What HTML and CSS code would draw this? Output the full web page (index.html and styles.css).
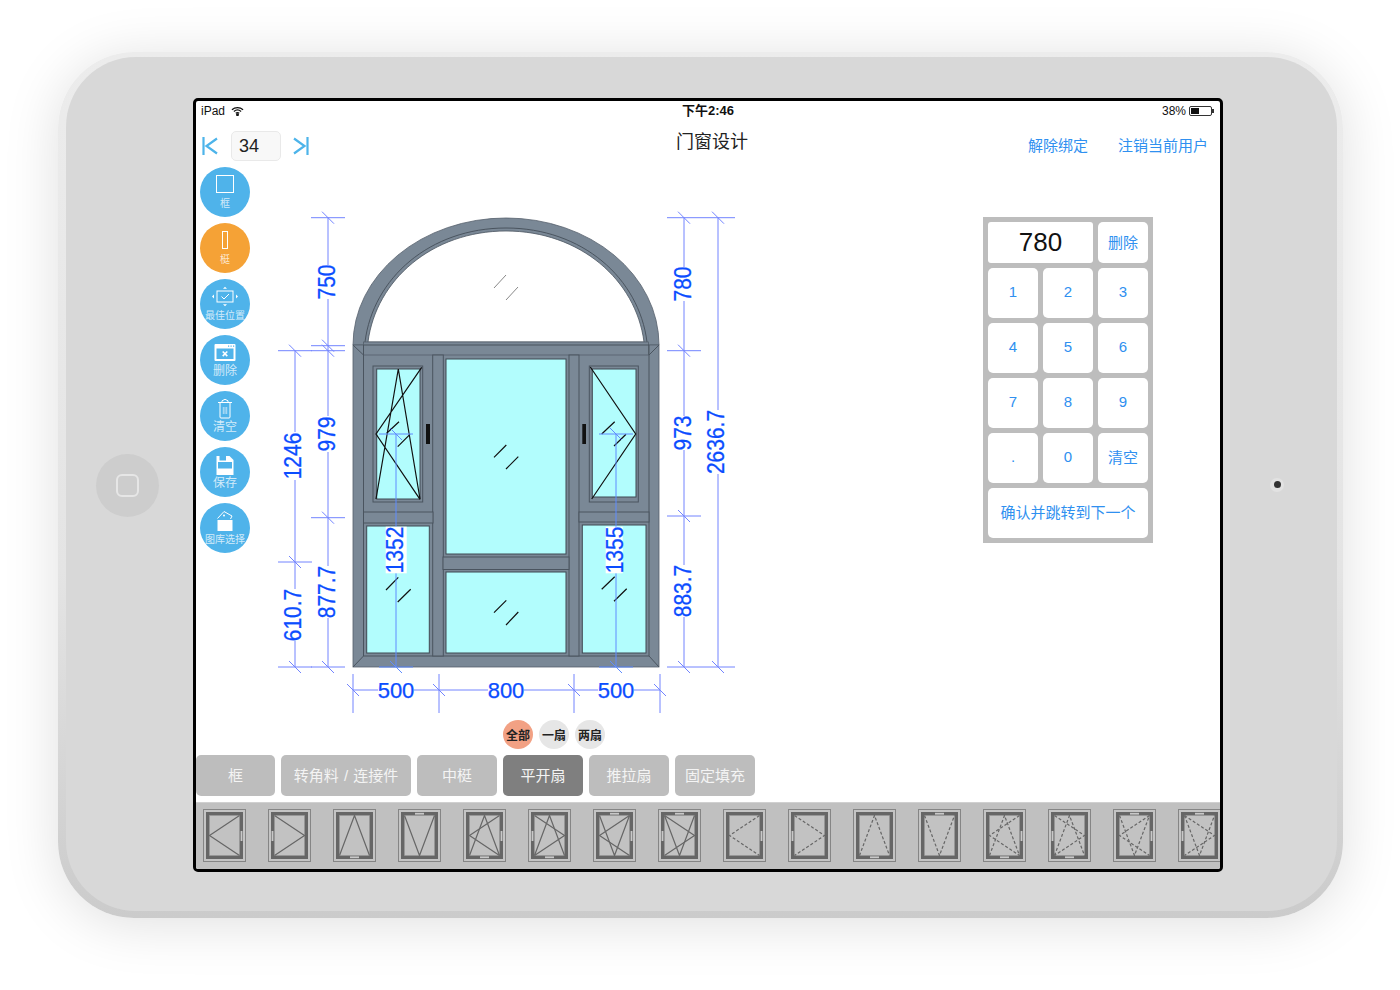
FILE: index.html
```html
<!DOCTYPE html>
<html lang="zh-CN">
<head>
    <meta charset="UTF-8">
    <meta name="viewport" content="width=device-width, initial-scale=1.0">
    <title>门窗设计</title>
    <link rel="stylesheet" href="styles.css">
</head>
<body>
    <svg class="svg-defs" aria-hidden="true">
        <defs>
            <g id="tb">
                <rect class="tb-outer" x=".5" y=".5" width="42" height="52"/>
                <rect class="tb-frame" x="3" y="3" width="37" height="47"/>
                <rect class="tb-pane" x="6.5" y="6.5" width="30" height="40"/>
            </g>
            <polyline id="open-left" points="36.5,6.5 6.5,26.5 36.5,46.5"/>
            <polyline id="open-right" points="6.5,6.5 36.5,26.5 6.5,46.5"/>
            <polyline id="open-up" points="6.5,46.5 21.5,6.5 36.5,46.5"/>
            <polyline id="open-down" points="6.5,6.5 21.5,46.5 36.5,6.5"/>
            <rect id="h-right" class="tb-handle" x="37.6" y="22" width="1.8" height="10"/>
            <rect id="h-left" class="tb-handle" x="3.6" y="22" width="1.8" height="10"/>
            <rect id="h-top" class="tb-handle" x="17" y="3.8" width="9" height="1.8"/>
            <rect id="h-bottom" class="tb-handle" x="17" y="47.4" width="9" height="1.8"/>
            <g id="tk">
                <line x1="-17" y1="0" x2="17" y2="0"/>
                <line x1="-6" y1="-6" x2="6" y2="6"/>
            </g>
            <g id="tv">
                <line x1="0" y1="-16" x2="0" y2="23"/>
                <line x1="-6" y1="-6" x2="6" y2="6"/>
            </g>
        </defs>
    </svg>

    <div class="device">
        <div class="face">
            <div class="home-btn"><span class="home-glyph"></span></div>

            <div class="screen">
                <div class="status-bar">
                    <div class="status-left">
                        <span>iPad</span>
                        <svg class="wifi" viewBox="0 0 14 10"><path d="M1 3.6C4.4.5 9.6.5 13 3.6M3.1 5.6c2.3-2 5.5-2 7.8 0M5.1 7.4c1.1-.9 2.7-.9 3.8 0"/><circle cx="7" cy="9" r=".9"/></svg>
                    </div>
                    <div class="status-time">下午2:46</div>
                    <div class="status-right">
                        <span>38%</span>
                        <span class="battery"><span class="battery-level"></span></span>
                    </div>
                </div>

                <div class="top-bar">
                    <div class="pager">
                        <svg class="pager-arrow" viewBox="0 0 16 18"><path d="M1.5 0v18M15 1.5 4.5 9 15 16.5"/></svg>
                        <div class="pager-input">34</div>
                        <svg class="pager-arrow" viewBox="0 0 16 18"><path d="M14.5 0v18M1 1.5 11.5 9 1 16.5"/></svg>
                    </div>
                    <h1 class="page-title">门窗设计</h1>
                    <div class="top-links">
                        <a>解除绑定</a>
                        <a>注销当前用户</a>
                    </div>
                </div>

                <div class="main">
                    <div class="side-tools">
                        <button class="tool">
                            <svg viewBox="0 0 28 22"><rect class="ic-line" x="5.5" y="1.5" width="17" height="17"/></svg>
                            <span>框</span>
                        </button>
                        <button class="tool tool-on">
                            <svg viewBox="0 0 28 22"><rect class="ic-line" x="11.5" y="1.5" width="5" height="17"/></svg>
                            <span>梃</span>
                        </button>
                        <button class="tool">
                            <svg viewBox="0 0 28 22">
                                <rect class="ic-line" x="6" y="5" width="16" height="11"/>
                                <path class="ic-line" d="m10.5 10.5 2.5 2.5 5-5"/>
                                <path class="ic-fill" d="M14 .8l2 2h-4zM14 20.2l2-2h-4zM1 10.5l2-2v4zM27 10.5l-2-2v4z"/>
                            </svg>
                            <span>最佳位置</span>
                        </button>
                        <button class="tool tool-big">
                            <svg viewBox="0 0 28 22">
                                <rect class="ic-fill" x="3.500" y="2" width="21" height="17" rx="1"/>
                                <rect class="ic-cut" x="5.500" y="6.500" width="17" height="10.500"/>
                                <path class="ic-cut" d="M17 3.500h1.200v1.200H17zM19.500 3.500h1.200v1.200h-1.200zM22 3.500h1.200v1.200H22z"/>
                                <path class="ic-line-thick" d="m11.700 9.500 4.600 4.600M16.300 9.500l-4.600 4.600"/>
                            </svg>
                            <span>删除</span>
                        </button>
                        <button class="tool tool-big">
                            <svg viewBox="0 0 28 22">
                                <path class="ic-line" d="M7 4.500h14M11 4.500V2.800l3-1.500 3 1.500v1.700M9 4.500v14.500a1 1 0 0 0 1 1h8a1 1 0 0 0 1-1V4.500"/>
                                <path class="ic-thin" d="M12.300 9v7M14 9v7M15.700 9v7"/>
                            </svg>
                            <span>清空</span>
                        </button>
                        <button class="tool tool-big">
                            <svg viewBox="0 0 28 22">
                                <path class="ic-fill" d="M5.500 2h13l4 4v15h-17z"/>
                                <rect class="ic-cut" x="8.500" y="2" width="6.500" height="4.500"/>
                                <rect class="ic-cut" x="7" y="8" width="14" height="6.500"/>
                            </svg>
                            <span>保存</span>
                        </button>
                        <button class="tool">
                            <svg viewBox="0 0 28 22">
                                <path class="ic-line" d="m6.500 8.500 6.500-7 8 4.500-1.500 3"/>
                                <circle class="ic-fill" cx="13" cy="5.500" r="1"/>
                                <rect class="ic-fill" x="6.500" y="10" width="15" height="11"/>
                            </svg>
                            <span>图库选择</span>
                        </button>
                    </div>

                    <!-- viewBox uses the same numbers as the page so parts are easy to place -->
                    <svg class="drawing" viewBox="270 205 480 515">
                        <path class="prof" d="M353 345A153 127 0 0 1 659 345Z"/>
                        <path class="arch-line" d="M365 342C373 278 430 228 506 228C582 228 639 278 647 342"/>
                        <path class="arch-glass" d="M368 342C376 280 432 231 506 231C580 231 636 280 644 342Z"/>

                        <rect class="prof" x="353" y="345" width="306" height="322"/>
                        <rect class="prof" x="363.500" y="342" width="285" height="13"/>
                        <path class="prof-line" d="M363.500 345V656H649V345ZM353 345l10.500 10M659 345l-10 10M353 667l10.500-11M659 667l-10-11"/>

                        <rect class="prof-in" x="432.700" y="355" width="10.600" height="301"/>
                        <rect class="prof-in" x="569" y="355" width="10" height="301"/>
                        <rect class="prof-in" x="443" y="557" width="126" height="12.500"/>
                        <rect class="prof-in" x="363.500" y="512" width="69.500" height="11"/>
                        <rect class="prof-in" x="579" y="512" width="70" height="10"/>

                        <rect class="glass" x="446" y="359" width="120" height="195"/>
                        <rect class="glass" x="446" y="572" width="120" height="81"/>
                        <rect class="glass" x="366.700" y="526" width="62.600" height="127"/>
                        <rect class="glass" x="582.300" y="525" width="63.700" height="128"/>

                        <rect class="prof-in" x="373" y="366" width="49.700" height="136"/>
                        <rect class="glass" x="376.700" y="369" width="43.300" height="130"/>
                        <rect class="prof-in" x="589.300" y="366" width="49" height="136"/>
                        <rect class="glass" x="592.300" y="369" width="43.700" height="128"/>

                        <rect class="handle" x="426" y="424" width="4" height="20"/>
                        <rect class="handle" x="582.300" y="424" width="3.700" height="20"/>

                        <path class="sash-line" d="M421.700 367.300 376 434 420 499.300M376 499 398.300 369 420 499"/>
                        <path class="sash-line" d="M590.300 367 635.700 434 591.700 499"/>

                        <path class="slash" d="M494 457.300 506.300 445M506 469 518.300 456.700M494 612.700 506.300 600.300M506 625 518.300 612M386.700 433.300 399 421.700M397.700 446.700 410 434.300M386 590 398.300 577.300M397.700 602 410.700 589.300M601.700 434 614.700 421.700M614 446 626 434.300M601.700 589.300 614.700 576.700M614 601.300 626.700 588.700"/>
                        <path class="slash-thin" d="M494 288 506 275M506 300 518 287"/>

                        <g class="dim">
                            <path d="M295 350.700V432M295 480V589M295 641V667M328 217.700V265M328 299V416M328 452V566M328 618V667M684 217.700V267M684 301V416M684 450V565M684 617V667M718 217.700V410M718 474V667"/>
                            <path d="M353 690H378M414 690H488M524 690H598M634 690H660"/>
                            <use href="#tk" x="295" y="350.700"/>
                            <use href="#tk" x="295" y="562"/>
                            <use href="#tk" x="295" y="667"/>
                            <use href="#tk" x="328" y="217.700"/>
                            <use href="#tk" x="328" y="345.700"/>
                            <use href="#tk" x="328" y="350.700"/>
                            <use href="#tk" x="328" y="517.700"/>
                            <use href="#tk" x="328" y="667"/>
                            <use href="#tk" x="684" y="217.700"/>
                            <use href="#tk" x="684" y="350.700"/>
                            <use href="#tk" x="684" y="516"/>
                            <use href="#tk" x="684" y="667"/>
                            <use href="#tk" x="718" y="217.700"/>
                            <use href="#tk" x="718" y="667"/>
                            <use href="#tv" x="353" y="690"/>
                            <use href="#tv" x="439" y="690"/>
                            <use href="#tv" x="574" y="690"/>
                            <use href="#tv" x="660" y="690"/>
                        </g>
                        <g class="dim dim-inner">
                            <path d="M396 434V667M616 434V667"/>
                            <use href="#tk" x="396" y="434"/>
                            <use href="#tk" x="396" y="667"/>
                            <use href="#tk" x="616" y="434"/>
                            <use href="#tk" x="616" y="667"/>
                        </g>

                        <rect class="label-bg" x="385.700" y="526.700" width="21" height="46.600"/>
                        <rect class="label-bg" x="605.700" y="526.700" width="17" height="46.600"/>

                        <text class="dim-v" transform="translate(301 456) rotate(-90) scale(1 1.13)">1246</text>
                        <text class="dim-v" transform="translate(301 615) rotate(-90) scale(1 1.13)">610.7</text>
                        <text class="dim-v" transform="translate(335 282) rotate(-90) scale(1 1.13)">750</text>
                        <text class="dim-v" transform="translate(335 434) rotate(-90) scale(1 1.13)">979</text>
                        <text class="dim-v" transform="translate(335 592) rotate(-90) scale(1 1.13)">877.7</text>
                        <text class="dim-v" transform="translate(403 550) rotate(-90) scale(1 1.13)">1352</text>
                        <text class="dim-v" transform="translate(622.500 550) rotate(-90) scale(1 1.13)">1355</text>
                        <text class="dim-v" transform="translate(691 284) rotate(-90) scale(1 1.13)">780</text>
                        <text class="dim-v" transform="translate(691 433) rotate(-90) scale(1 1.13)">973</text>
                        <text class="dim-v" transform="translate(691 591) rotate(-90) scale(1 1.13)">883.7</text>
                        <text class="dim-v" transform="translate(724 442) rotate(-90) scale(1 1.13)">2636.7</text>
                        <text class="dim-h" x="396" y="698">500</text>
                        <text class="dim-h" x="506" y="698">800</text>
                        <text class="dim-h" x="616" y="698">500</text>
                    </svg>

                    <div class="keypad">
                        <div class="key-display">780</div>
                        <button class="key">删除</button>
                        <button class="key">1</button>
                        <button class="key">2</button>
                        <button class="key">3</button>
                        <button class="key">4</button>
                        <button class="key">5</button>
                        <button class="key">6</button>
                        <button class="key">7</button>
                        <button class="key">8</button>
                        <button class="key">9</button>
                        <button class="key">.</button>
                        <button class="key">0</button>
                        <button class="key">清空</button>
                        <button class="key key-wide">确认并跳转到下一个</button>
                    </div>
                </div>

                <div class="chips">
                    <span class="chip chip-on">全部</span>
                    <span class="chip">一扇</span>
                    <span class="chip">两扇</span>
                </div>

                <div class="tabs">
                    <button class="tab tab-s">框</button>
                    <button class="tab tab-l">转角料 / 连接件</button>
                    <button class="tab">中梃</button>
                    <button class="tab tab-on">平开扇</button>
                    <button class="tab">推拉扇</button>
                    <button class="tab">固定填充</button>
                </div>

                <div class="palette">
                    <svg class="thumb" viewBox="0 0 43 53"><use href="#tb"/><use href="#h-right"/><use href="#open-left"/></svg>
                    <svg class="thumb" viewBox="0 0 43 53"><use href="#tb"/><use href="#h-left"/><use href="#open-right"/></svg>
                    <svg class="thumb" viewBox="0 0 43 53"><use href="#tb"/><use href="#h-bottom"/><use href="#open-up"/></svg>
                    <svg class="thumb" viewBox="0 0 43 53"><use href="#tb"/><use href="#h-top"/><use href="#open-down"/></svg>
                    <svg class="thumb" viewBox="0 0 43 53"><use href="#tb"/><use href="#h-right"/><use href="#h-bottom"/><use href="#open-left"/><use href="#open-up"/></svg>
                    <svg class="thumb" viewBox="0 0 43 53"><use href="#tb"/><use href="#h-left"/><use href="#h-bottom"/><use href="#open-right"/><use href="#open-up"/></svg>
                    <svg class="thumb" viewBox="0 0 43 53"><use href="#tb"/><use href="#h-right"/><use href="#h-top"/><use href="#open-left"/><use href="#open-down"/></svg>
                    <svg class="thumb" viewBox="0 0 43 53"><use href="#tb"/><use href="#h-left"/><use href="#h-top"/><use href="#open-right"/><use href="#open-down"/></svg>
                    <svg class="thumb dashed" viewBox="0 0 43 53"><use href="#tb"/><use href="#h-right"/><use href="#open-left"/></svg>
                    <svg class="thumb dashed" viewBox="0 0 43 53"><use href="#tb"/><use href="#h-left"/><use href="#open-right"/></svg>
                    <svg class="thumb dashed" viewBox="0 0 43 53"><use href="#tb"/><use href="#h-bottom"/><use href="#open-up"/></svg>
                    <svg class="thumb dashed" viewBox="0 0 43 53"><use href="#tb"/><use href="#h-top"/><use href="#open-down"/></svg>
                    <svg class="thumb dashed" viewBox="0 0 43 53"><use href="#tb"/><use href="#h-right"/><use href="#h-bottom"/><use href="#open-left"/><use href="#open-up"/></svg>
                    <svg class="thumb dashed" viewBox="0 0 43 53"><use href="#tb"/><use href="#h-left"/><use href="#h-bottom"/><use href="#open-right"/><use href="#open-up"/></svg>
                    <svg class="thumb dashed" viewBox="0 0 43 53"><use href="#tb"/><use href="#h-right"/><use href="#h-top"/><use href="#open-left"/><use href="#open-down"/></svg>
                    <svg class="thumb dashed" viewBox="0 0 43 53"><use href="#tb"/><use href="#h-left"/><use href="#h-top"/><use href="#open-right"/><use href="#open-down"/></svg>
                </div>
            </div>

            <div class="camera"><span class="lens"></span></div>
        </div>
    </div>
</body>
</html>
```

FILE: styles.css
```css
* {
    box-sizing: border-box;
}
html, body {
    margin: 0;
    height: 990px;
    overflow: hidden;
    background-color: #fff;
}
body {
    padding: 52px 57px 0 58px;
    font-family: "Liberation Sans", "Noto Sans CJK SC", sans-serif;
    color: #111;
}
button {
    font-family: inherit;
    border: none;
    padding: 0;
    cursor: pointer;
}
.svg-defs {
    position: absolute;
    width: 0;
    height: 0;
}

/* device shell */
.device {
    width: 1285px;
    height: 866px;
    padding: 5px 6px 7px 8px;
    border-radius: 76px;
    background: linear-gradient(#ececec, #e4e4e4 60%, #cbcbcb);
    box-shadow: 0 6px 55px rgba(0, 0, 0, 0.13);
}
.face {
    height: 100%;
    display: grid;
    grid-template-columns: 127px 1030px 1fr;
    align-items: center;
    border-radius: 70px;
    background-color: #d8d8d8;
}
.home-btn {
    width: 63px;
    height: 63px;
    margin: 2px 0 0 30px;
    display: flex;
    align-items: center;
    justify-content: center;
    border-radius: 50%;
    background-color: #cdcdcd;
}
.home-glyph {
    width: 23px;
    height: 23px;
    border: 2px solid #e6e6e6;
    border-radius: 6px;
}
.camera {
    width: 14px;
    height: 14px;
    margin: 1px 0 0 47px;
    display: flex;
    align-items: center;
    justify-content: center;
    border-radius: 50%;
    background-color: #e2e2e2;
}
.lens {
    width: 7px;
    height: 7px;
    border-radius: 50%;
    background-color: #333;
}
.screen {
    align-self: start;
    width: 1030px;
    height: 774px;
    margin-top: 41px;
    display: flex;
    flex-direction: column;
    overflow: hidden;
    border: 3px solid #000;
    border-radius: 5px;
    background-color: #fff;
}

/* status bar */
.status-bar {
    height: 20px;
    flex-shrink: 0;
    display: grid;
    grid-template-columns: 1fr auto 1fr;
    align-items: center;
    padding: 0 8px 0 5px;
    font-size: 12px;
}
.status-left, .status-right {
    display: flex;
    align-items: center;
    gap: 6px;
}
.status-right {
    justify-content: flex-end;
    gap: 3px;
}
.status-time {
    margin: -1px 0 0 3px;
    font-size: 13px;
    line-height: 20px;
    font-weight: bold;
}
.wifi {
    width: 13px;
    height: 10px;
    fill: #111;
    stroke: #111;
    stroke-width: 1.300;
}
.wifi path {
    fill: none;
}
.battery {
    position: relative;
    width: 23px;
    height: 10px;
    padding: 1px;
    border: 1px solid #333;
    border-radius: 2px;
}
.battery::after {
    content: "";
    position: absolute;
    right: -3px;
    top: 2px;
    width: 2px;
    height: 4px;
    background-color: #333;
}
.battery-level {
    display: block;
    width: 8px;
    height: 100%;
    background-color: #111;
}

/* header */
.top-bar {
    height: 46px;
    flex-shrink: 0;
    display: grid;
    grid-template-columns: 480px auto 1fr;
}
.pager {
    display: flex;
    align-items: center;
    padding: 4px 0 0 6px;
    height: 46px;
}
.pager-arrow {
    width: 16px;
    height: 18px;
    fill: none;
    stroke: #4db4ea;
    stroke-width: 2.200;
}
.pager-input {
    width: 50px;
    height: 30px;
    margin: 0 12px 0 13px;
    padding-left: 7px;
    line-height: 28px;
    font-size: 18px;
    color: #222;
    border: 1px solid #e9e9e9;
    border-radius: 5px;
    background-color: #f8f8f8;
}
.page-title {
    margin: 9px 0 0;
    font-size: 18px;
    font-weight: 400;
    line-height: 24px;
    color: #222;
}
.top-links {
    display: flex;
    justify-content: flex-end;
    gap: 30px;
    padding: 13px 12px 0 0;
    font-size: 15px;
    line-height: 24px;
    color: #2f90f0;
}

/* tools + drawing + keypad */
.main {
    height: 553px;
    flex-shrink: 0;
    display: flex;
}
.side-tools {
    width: 74px;
    flex-shrink: 0;
    padding-left: 4px;
    display: flex;
    flex-direction: column;
    gap: 6px;
}
.tool {
    width: 50px;
    height: 50px;
    padding-top: 7px;
    display: flex;
    flex-direction: column;
    align-items: center;
    border-radius: 50%;
    background-color: #4fb3ea;
    color: rgba(255, 255, 255, 0.75);
    font-size: 10px;
    line-height: 15px;
    white-space: nowrap;
}
.tool svg {
    width: 28px;
    height: 22px;
    flex-shrink: 0;
}
.tool-big {
    font-size: 12px;
}
.tool-on {
    background-color: #f5a236;
}
.ic-line {
    fill: none;
    stroke: #fff;
    stroke-width: 1;
}
.ic-thin {
    fill: none;
    stroke: #fff;
    stroke-width: .6;
}
.ic-line-thick {
    fill: none;
    stroke: #fff;
    stroke-width: 1.600;
}
.ic-fill {
    fill: #fff;
}
.ic-cut {
    fill: #4fb3ea;
}
.drawing {
    width: 480px;
    height: 515px;
    margin-top: 38px;
    flex-shrink: 0;
}
.prof {
    fill: #7a8896;
    stroke: #55606c;
    stroke-width: .8;
}
.prof-in {
    fill: #7a8896;
    stroke: #4a545f;
    stroke-width: 1;
}
.prof-line, .arch-line {
    fill: none;
    stroke: #4a545f;
    stroke-width: 1;
}
.arch-glass {
    fill: #fff;
    stroke: #4a545f;
    stroke-width: .8;
}
.glass {
    fill: #b2fdfd;
    stroke: #3f4953;
    stroke-width: 1;
}
.handle {
    fill: #111;
}
.sash-line {
    fill: none;
    stroke: #111;
    stroke-width: 1.200;
}
.slash {
    fill: none;
    stroke: #111;
    stroke-width: 1.200;
}
.slash-thin {
    fill: none;
    stroke: #888;
    stroke-width: 1;
}
.dim {
    fill: none;
    stroke: #7284ff;
    stroke-width: 1;
}
.dim-inner {
    stroke: #5f8cff;
}
.label-bg {
    fill: #fff;
}
.dim-v, .dim-h {
    font-size: 21px;
    fill: #0b4dff;
    stroke: #0b4dff;
    stroke-width: .25;
    text-anchor: middle;
}
.dim-h {
    font-size: 22px;
}

.keypad {
    width: 170px;
    height: 326px;
    margin: 50px 0 0 233px;
    flex-shrink: 0;
    padding: 5px;
    display: grid;
    grid-template-columns: repeat(3, 50px);
    grid-template-rows: 41px repeat(5, 50px);
    gap: 5px;
    background-color: #bdbdbd;
}
.key-display {
    grid-column: span 2;
    background-color: #fff;
    border-radius: 3px;
    text-align: center;
    font-size: 26px;
    line-height: 41px;
    color: #111;
}
.key {
    padding-bottom: 3px;
    border-radius: 5px;
    background-color: #fff;
    color: #2f90f0;
    font-size: 15px;
}
.key-wide {
    grid-column: span 3;
}

/* filters */
.chips {
    height: 29px;
    flex-shrink: 0;
    display: flex;
    gap: 6px;
    margin-left: 307px;
}
.chip {
    width: 30px;
    display: flex;
    align-items: center;
    justify-content: center;
    border-radius: 50%;
    background-color: #e6e6e6;
    color: #222;
    font-size: 12px;
    font-weight: bold;
    white-space: nowrap;
}
.chip-on {
    background-color: #f2a184;
}
.tabs {
    height: 41px;
    margin-top: 6px;
    flex-shrink: 0;
    display: flex;
    gap: 6px;
}
.tab {
    width: 80px;
    padding-bottom: 2px;
    border-radius: 5px;
    background-color: #bdbdbd;
    color: #f4f4f4;
    font-size: 15px;
    word-spacing: 1px;
}
.tab-s {
    width: 79px;
}
.tab-l {
    width: 130px;
}
.tab-on {
    background-color: #7f7f7f;
}

/* thumbnails, the last one is cut off by the screen edge */
.palette {
    height: 68px;
    margin-top: 6px;
    flex-shrink: 0;
    display: flex;
    align-items: flex-start;
    gap: 22px;
    padding: 6px 0 0 7px;
    overflow: hidden;
    border-top: 1px solid #d0d0d0;
    background-color: #c0c0c0;
}
.thumb {
    width: 43px;
    height: 53px;
    flex-shrink: 0;
    fill: none;
    stroke: #666;
    stroke-width: 1.200;
}
.dashed {
    stroke-dasharray: 3 2;
}
.tb-outer {
    fill: #c4c4c4;
    stroke: #858585;
    stroke-width: 1;
    stroke-dasharray: none;
}
.tb-frame {
    fill: #666;
    stroke: none;
}
.tb-pane {
    fill: #c2c2c2;
    stroke: #999;
    stroke-width: .5;
    stroke-dasharray: none;
}
.tb-handle {
    fill: #c8c8c8;
    stroke: none;
}
```
